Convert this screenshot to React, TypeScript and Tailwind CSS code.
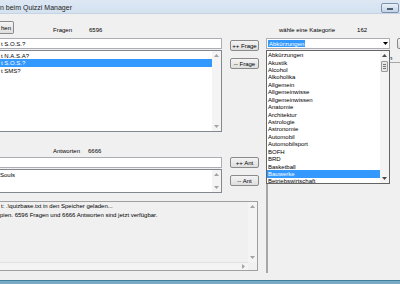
import React from 'react';

const categories = [
  'Abkürzungen',
  'Akustik',
  'Alcohol',
  'Alkoholika',
  'Allgemein',
  'Allgemeinwisse',
  'Allgemeinwissen',
  'Anatomie',
  'Architektur',
  'Astrologie',
  'Astronomie',
  'Automobil',
  'Automobilsport',
  'BOFH',
  'BRD',
  'Basketball',
  'Bauwerke',
  'Betriebswirtschaft',
];

const questions = ['t N.A.S.A?', 't S.O.S.?', 't SMS?'];

function Arrow({ dir, color = '#a3a3a3' }: { dir: 'up' | 'down' | 'right'; color?: string }) {
  const d = dir === 'up' ? 'M0 3L2.5 0L5 3Z' : dir === 'down' ? 'M0 0L2.5 3L5 0Z' : 'M0 0L3 2.5L0 5Z';
  const w = dir === 'right' ? 3 : 5;
  const h = dir === 'right' ? 5 : 3;
  return (
    <svg width={w} height={h} viewBox={`0 0 ${w} ${h}`}>
      <path d={d} fill={color} />
    </svg>
  );
}

// vertical scrollbar, disabled unless a thumb is given
function VScroll({ thumb, color }: { thumb?: boolean; color?: string }) {
  return (
    <div className="flex h-full w-[9px] flex-col bg-[#f4f4f4]">
      <div className="flex h-[9px] items-center justify-center">
        <Arrow dir="up" color={color} />
      </div>
      <div className="flex-1">
        {thumb && (
          <div className="mx-[1px] mt-[1px] flex h-[11px] flex-col items-center justify-center gap-[1px] rounded-[1px] border border-[#9a9a9a] bg-[#e6e6e6]">
            <div className="h-[1px] w-[3px] bg-[#777]" />
            <div className="h-[1px] w-[3px] bg-[#777]" />
            <div className="h-[1px] w-[3px] bg-[#777]" />
          </div>
        )}
      </div>
      <div className="flex h-[9px] items-center justify-center">
        <Arrow dir="down" color={color} />
      </div>
    </div>
  );
}

function WinButton({ label, className = '' }: { label: string; className?: string }) {
  return (
    <div
      className={`flex h-[11px] w-[29px] items-center justify-center rounded-[2px] border border-[#8a8a8a] bg-gradient-to-b from-[#f4f4f4] to-[#dedede] text-[6px] leading-none text-black ${className}`}
    >
      {label}
    </div>
  );
}

export default function App() {
  return (
    <div className="relative flex h-[284px] w-[400px] flex-col overflow-hidden bg-[#f0f0f0] font-['Liberation_Sans',Arial,sans-serif] text-[6px] leading-none text-black">
      {/* Title bar */}
      <div className="flex h-[14px] shrink-0 items-start justify-between border-b border-[#c5d3e2] bg-gradient-to-b from-[#dde8f4] to-[#d4e1ef]">
        <span className="mt-[4px] text-[7px] leading-[7px] text-[#1e1e1e]">n beim Quizzi Manager</span>
        <div className="mr-[1px] mt-[3px] flex h-[10px] w-[18px] items-center justify-center rounded-[2px] border border-[#7d93ad] bg-gradient-to-b from-[#e9f0f8] to-[#c3d3e6]">
          <div className="mt-[2px] h-[2px] w-[6px] border border-[#4d5f75] bg-white" />
        </div>
      </div>

      <div className="flex flex-1">
        {/* Left: questions, answers, log */}
        <div className="flex w-[266px] shrink-0 flex-col">
          <div className="flex h-[24px] items-start pt-[7px]">
            <div className="flex h-[13px] w-[14px] items-center rounded-r-[2px] border border-l-0 border-[#8a8a8a] bg-gradient-to-b from-[#f4f4f4] to-[#dedede] pl-[1px]">
              hen
            </div>
            <span className="ml-[39px] mt-[6px]">Fragen</span>
            <span className="ml-[17px] mt-[6px]">6596</span>
          </div>

          <div className="flex">
            <div className="flex w-[222px] flex-col">
              <div className="flex h-[11px] items-center border border-l-0 border-[#abadb3] bg-white pl-[1px]">t S.O.S.?</div>
              <div className="mt-[1px] flex h-[82px] border border-l-0 border-[#828790] bg-white">
                <div className="flex-1 pt-[1px]">
                  {questions.map((q, i) => (
                    <div
                      key={q}
                      className={`flex h-[7.43px] items-center pl-[1px] ${i === 1 ? 'bg-[#3399ff] text-white' : ''}`}
                    >
                      {q}
                    </div>
                  ))}
                </div>
                <VScroll />
              </div>
            </div>
            <div className="ml-[8px] flex flex-col">
              <WinButton label="++ Frage" className="mt-[2px]" />
              <WinButton label="-- Frage" className="mt-[7px]" />
            </div>
          </div>

          <div className="flex h-[25px] items-start pt-[16px]">
            <span className="ml-[53px]">Antworten</span>
            <span className="ml-[8px]">6666</span>
          </div>

          <div className="flex">
            <div className="flex w-[222px] flex-col">
              <div className="h-[11px] border border-l-0 border-[#abadb3] bg-white" />
              <div className="mt-[1px] flex h-[24px] border border-l-0 border-[#828790] bg-white">
                <div className="flex-1 pt-[1px]">
                  <div className="flex h-[7.43px] items-center">Souls</div>
                </div>
                <VScroll />
              </div>
            </div>
            <div className="ml-[8px] flex flex-col">
              <WinButton label="++ Ant" />
              <WinButton label="-- Ant" className="mt-[7px]" />
            </div>
          </div>

          {/* Log */}
          <div className="mt-[8px] flex h-[70px] w-[258px] flex-col border border-l-0 border-[#a0a0a0] bg-[#f0f0f0]">
            <div className="flex flex-1">
              <div className="flex-1 whitespace-nowrap pl-[1px] leading-[8.6px]">
                <div>t: .\quizbase.txt in den Speicher geladen...</div>
                <div className="-ml-[1px]">pien. 6596 Fragen und 6666 Antworten sind jetzt verfügbar.</div>
              </div>
              <VScroll />
            </div>
            <div className="flex h-[8px]">
              <div className="flex flex-1 items-center justify-end border-t border-[#e2e2e2] bg-[#f4f4f4] pr-[3px]">
                <Arrow dir="right" />
              </div>
              <div className="w-[9px] bg-[#f0f0f0]" />
            </div>
          </div>
        </div>

        {/* Right: categories */}
        <div className="flex flex-1 flex-col">
          <div className="flex pt-[13px]">
            <span className="ml-[13px]">wähle eine Kategorie</span>
            <span className="ml-[22px]">162</span>
          </div>
          <div className="mt-[5px] flex">
            <div className="flex h-[11px] w-[124px] items-center border border-[#abadb3] bg-white">
              <div className="ml-[1px] flex h-[7px] items-center bg-[#3399ff] px-[1px] text-white">Abkürzungen</div>
              <div className="ml-auto flex h-full w-[8px] items-center justify-center">
                <Arrow dir="down" color="#000" />
              </div>
            </div>
            <WinButton label="" className="ml-[7px] w-[20px]" />
          </div>
          <div className="relative mb-[7px] mt-[13px] flex flex-1 border-l-2 border-t border-[#a6a6a6]">
            <span className="absolute left-[121px] top-[-8px]">n</span>
            <div className="ml-auto mt-[12px] h-[36px] w-[10px] border-l border-t border-[#b4b4b4]" />
          </div>
        </div>
      </div>

      {/* Window bottom frame */}
      <div className="h-[1px] shrink-0 bg-[#3f7f9d]" />
      <div className="h-[3px] shrink-0 bg-[#79aac3]" />

      {/* Open dropdown list */}
      <div className="absolute left-[266px] top-[50px] flex h-[134px] w-[124px] border border-[#646464] bg-white">
        <div className="flex-1 pt-[0.5px]">
          {categories.map((c) => (
            <div
              key={c}
              className={`flex h-[7.43px] items-center pl-[1px] ${c === 'Bauwerke' ? 'bg-[#3399ff] text-white' : ''}`}
            >
              {c}
            </div>
          ))}
        </div>
        <VScroll thumb color="#4a4a4a" />
      </div>
    </div>
  );
}
